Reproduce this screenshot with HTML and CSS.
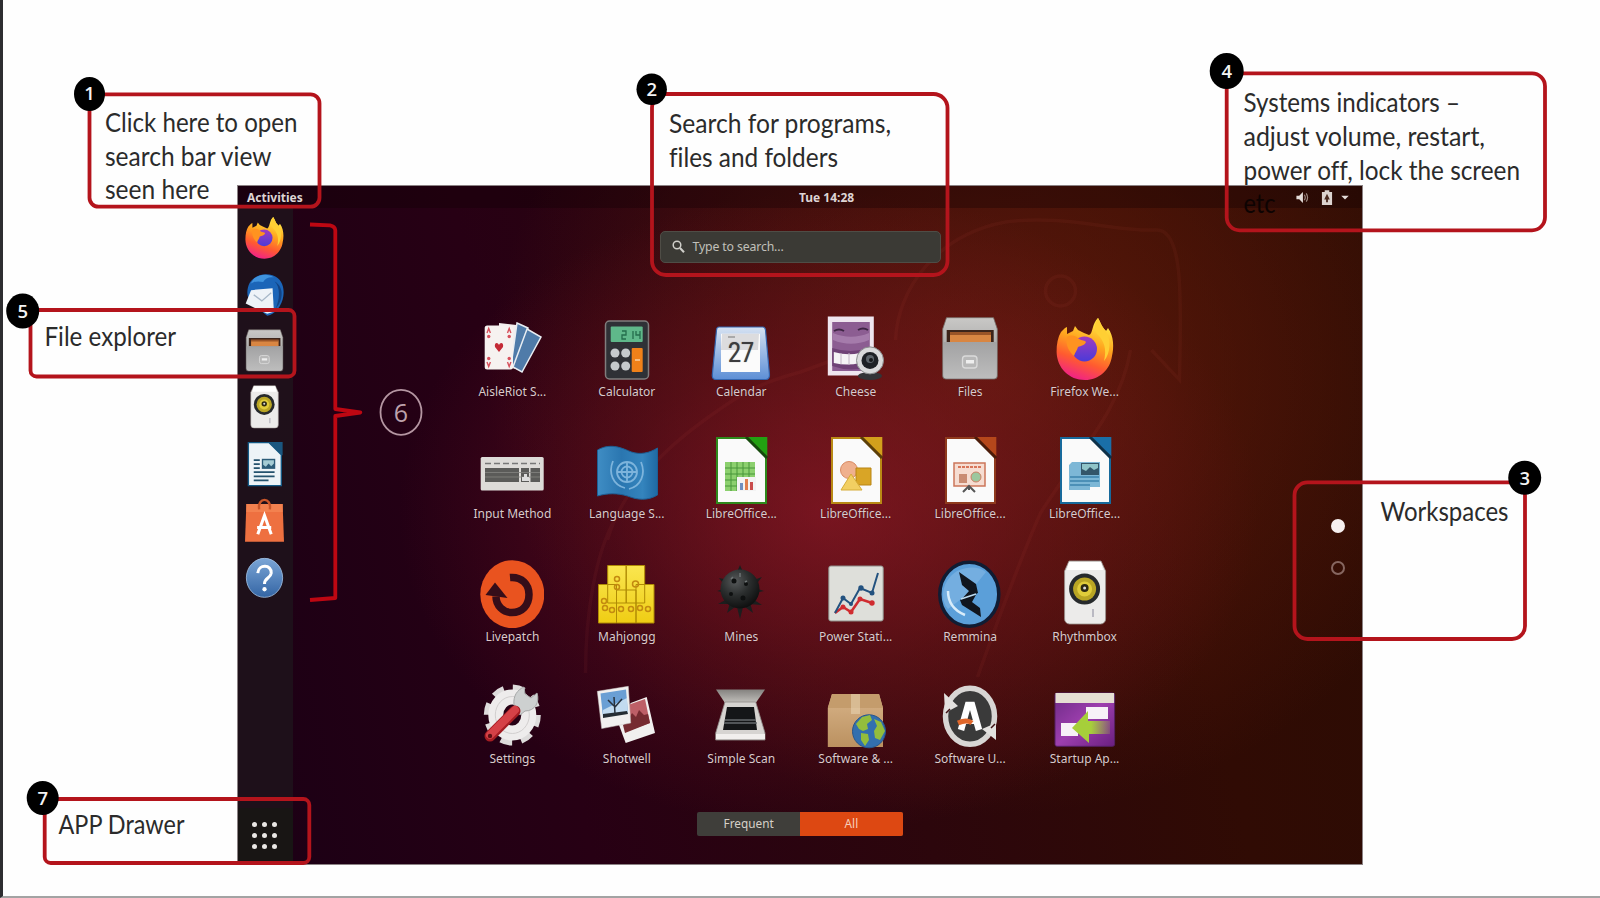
FILE: index.html
```html
<!DOCTYPE html>
<html lang="en">
<head>
<meta charset="utf-8">
<title>Ubuntu desktop overview</title>
<link rel="stylesheet" href="styles.css">
</head>
<body>
<svg class="defs" width="0" height="0" aria-hidden="true">
  <defs>
    <linearGradient id="gFox" x1=".7" y1="0" x2=".35" y2="1"><stop offset="0" stop-color="#fff04a"/><stop offset=".4" stop-color="#ffa51e"/><stop offset=".7" stop-color="#ff5a30"/><stop offset="1" stop-color="#f0208a"/></linearGradient>
    <linearGradient id="gPurple" x1="0" y1="0" x2="0" y2="1"><stop offset="0" stop-color="#a03cc0"/><stop offset="1" stop-color="#4b3ad8"/></linearGradient>
    <linearGradient id="gSteel" x1="0" y1="0" x2="0" y2="1"><stop offset="0" stop-color="#c9c8c6"/><stop offset="1" stop-color="#8f8f90"/></linearGradient>
    <linearGradient id="gFront" x1="0" y1="0" x2="0" y2="1"><stop offset="0" stop-color="#a2a2a3"/><stop offset="1" stop-color="#bdbdbd"/></linearGradient>
    <linearGradient id="gFlag" x1="0" y1="0" x2="1" y2="0"><stop offset="0" stop-color="#3f8dc4"/><stop offset=".4" stop-color="#2a76b0"/><stop offset=".75" stop-color="#3484bd"/><stop offset="1" stop-color="#1f69a3"/></linearGradient>
    <linearGradient id="gCal" x1="0" y1="0" x2="0" y2="1"><stop offset="0" stop-color="#d6e2f2"/><stop offset="1" stop-color="#5d8fd6"/></linearGradient>
    <linearGradient id="gBox" x1="0" y1="0" x2="0" y2="1"><stop offset="0" stop-color="#d7b388"/><stop offset="1" stop-color="#bb9160"/></linearGradient>
    <linearGradient id="gStart" x1="0" y1="0" x2="1" y2="1"><stop offset="0" stop-color="#6d2a86"/><stop offset=".5" stop-color="#9d3fae"/><stop offset="1" stop-color="#6a1f80"/></linearGradient>
    <linearGradient id="gArrow" x1="0" y1="0" x2="1" y2="0"><stop offset=".5" stop-color="#a6cf3a"/><stop offset="1" stop-color="#a6cf3a" stop-opacity=".2"/></linearGradient>
    <linearGradient id="gTile" x1="0" y1="0" x2="0" y2="1"><stop offset="0" stop-color="#fae650"/><stop offset="1" stop-color="#efcd14"/></linearGradient>
    <linearGradient id="gLid" x1="0" y1="0" x2="0" y2="1"><stop offset="0" stop-color="#84827f"/><stop offset="1" stop-color="#c2c0bc"/></linearGradient>
    <radialGradient id="gMine" cx=".38" cy=".3" r=".75"><stop offset="0" stop-color="#56595a"/><stop offset=".5" stop-color="#2a2d2d"/><stop offset="1" stop-color="#0c0d0d"/></radialGradient>
    <linearGradient id="gHelp" x1="0" y1="0" x2="0" y2="1"><stop offset="0" stop-color="#7aa5d6"/><stop offset="1" stop-color="#3465a4"/></linearGradient>

    <symbol id="firefox" viewBox="0 0 64 68">
      <path fill="url(#gFox)" d="M8 17l4-4 2-1v7l6-3 2-5 3 4 6 3 5 2c4-1 3-12 9-17 3 5 3 8 8 13l2-3c6 8 6 20 4 28C57 55 46 65 32 65 16 65 4 53 3.600 37 3.400 29 5 22 8 17z"/>
      <path fill="#ffcf34" d="M45 3c3 5 3 8 8 13 5 8 5 22-2 30 3-12 0-20-6-26-4-4-4-12 0-17z"/>
      <circle cx="31.500" cy="34" r="12.500" fill="url(#gPurple)"/>
      <path fill="#ff9320" d="M14 22c5-3 9-1 12 2 3 2 6 1 7 3-1 3-5 4-8 5-1 4-3 5-4 9-5-4-9-12-7-19z"/>
    </symbol>
    <symbol id="files" viewBox="0 0 64 68">
      <path fill="url(#gSteel)" stroke="#77706c" stroke-width=".8" d="M8.500 2.700h47L59.300 14v47a3 3 0 0 1-3 3H7.700a3 3 0 0 1-3-3V14z"/>
      <path fill="#3c241a" d="M8.700 15h47v12h-47z"/>
      <path fill="#d98642" d="M12 18.500h41V27H12z"/><path fill="#9a5427" d="M12 17h41v3H12z"/>
      <path fill="url(#gFront)" d="M5.200 27h53.600v33a3.500 3.500 0 0 1-3.500 3.500H8.700A3.500 3.500 0 0 1 5.200 60z"/>
      <rect x="24.500" y="41" width="14.500" height="12" rx="3" fill="#b8b8b8" stroke="#dadada" stroke-width="1.300"/><path fill="#eee" d="M28 45h8v3.500h-8z"/>
    </symbol>
    <symbol id="rhythm" viewBox="0 0 64 68">
      <path fill="#ecebea" stroke="#99928e" stroke-width=".8" d="M16 1h32l4.600 10v48a5 5 0 0 1-5 5H16.600a5 5 0 0 1-5-5V11z"/>
      <path fill="#fff" d="M16 2h32l2 8H14z"/>
      <circle cx="31.600" cy="29" r="15.500" fill="#272a2c"/><circle cx="31.600" cy="29" r="11.500" fill="#b9a524"/><circle cx="31.600" cy="29" r="7.500" fill="#e0cc3a"/><circle cx="31.600" cy="28" r="4" fill="#2d2912"/><circle cx="31.600" cy="28" r="1.500" fill="#ddd"/>
      <path stroke="#aaa9b4" stroke-width="1.500" d="M40 49v8"/>
    </symbol>
    <symbol id="writer" viewBox="0 0 64 68">
      <path fill="#fafafa" stroke="#176a9c" stroke-width="2" d="M8 1h31l18 19v46H8z"/><path fill="#1a6fa8" d="M38.300 0h20v19.500z"/><path stroke="#0d3048" stroke-width="3" d="M37 0l21 21"/>
      <path fill="#7db7d6" d="M19 25h28v25H37v3H16V28z"/><path fill="#33566a" d="M28 26h18v12H28z"/><path fill="#8fc4c8" d="M29 27h16v4l-4 2-4-3-4 4-4-2z"/>
      <path stroke="#3c84ad" stroke-width="1.300" d="M17 40h29M17 44h29M17 48h20"/>
    </symbol>
  </defs>
</svg>

<div class="page">
  <main class="desktop">
    <svg class="wallpaper-lines" viewBox="237.500 186 1124 678" aria-hidden="true">
      <path d="M585 673c0-60 10-120 30-155M607 540c10-35 30-60 53-83s50-42 73-57 45-22 67-28l60-22"/>
      <path d="M895 340c2-50 40-105 110-118 60-8 110 10 150 8 30-3 25 80 24 150l-28-30M1130 350c-10 60-50 100-90 163-20 45-40 100-63 164"/>
      <circle cx="1060" cy="291" r="15"/>
    </svg>
    <header class="topbar">
      <span class="activities">Activities</span>
      <span class="clock">Tue 14:28</span>
      <span class="tray">
        <svg width="14" height="13" viewBox="0 0 14 14"><path fill="#e4dcd8" d="M1 5h3l4-4v12L4 9H1z"/><path fill="none" stroke="#9c8880" stroke-width="1.300" d="M9.500 4q2 3 0 6M11.500 2.500q3 4.500 0 9"/></svg>
        <svg width="12" height="16" viewBox="0 0 13 17"><path fill="#dcd3cf" d="M4 0h5v2h3v14H1V2h3z"/><path fill="#4a2a20" d="M6.500 4l3 6h-2v3h-2v-3h-2z"/></svg>
        <svg class="caret" width="8" height="5" viewBox="0 0 9 6"><path fill="#e4dcd8" d="M0 .8h9L4.500 5.500z"/></svg>
      </span>
    </header>
    <div class="workarea">
      <nav class="dock">
        <svg class="dock-icon"><use href="#firefox"/></svg>
        <svg class="dock-icon" viewBox="0 0 64 68">
          <path fill="#1b65b8" d="M10 16C17 5 32 1 44 5c14 5 18 18 16 31-2 14-12 27-24 29L12 46C5 38 5 26 10 16z"/><path fill="#3f93de" d="M16 10c8-7 22-8 30-2-8-1-13 2-16 7-8-2-14-1-19 3z"/>
          <path fill="#124384" d="M47 14c9 8 8 28 1 41 12-12 14-33-1-41z"/>
          <path fill="#eef3f8" d="M4 47l8-20 32-3 2 35-10 3z"/><path fill="none" stroke="#a8b8c8" stroke-width="2" d="M16 34l12 9 14-12"/>
        </svg>
        <svg class="dock-icon"><use href="#files"/></svg>
        <svg class="dock-icon"><use href="#rhythm"/></svg>
        <svg class="dock-icon" viewBox="0 0 64 68">
          <path fill="#edf3f7" stroke="#135a86" stroke-width="2" d="M8 1h31l18 18v46H8z"/><path fill="#1a567f" d="M38 0h21v20z"/>
          <path stroke="#24526d" stroke-width="2.600" d="M16 27h9M16 33h9M16 39h9M16 45h31M16 51h31M16 57h22"/><path fill="#2b5b78" d="M28 25h20v15H28z"/><path fill="#a4cbd4" d="M30 27h16v5l-4 4-4-4-4 5-4-3z"/>
        </svg>
        <svg class="dock-icon" viewBox="0 0 64 68">
          <path fill="#ee7040" d="M5 9h54l2 56H3z"/><path fill="#f3814f" d="M5 9h54v12H5z"/><path fill="none" stroke="#c9562a" stroke-width="3.500" d="M24 17c-3-19 19-19 16 0"/>
          <path fill="none" stroke="#fff" stroke-width="4.500" d="M22 54l10-28 10 28M21 44h21"/>
        </svg>
        <svg class="dock-icon" viewBox="0 0 64 68">
          <ellipse cx="32" cy="34" rx="27" ry="29" fill="url(#gHelp)" stroke="#a4c3e6" stroke-width="1.200"/>
          <path fill="none" stroke="#fff" stroke-width="4.500" d="M22 27c1-14 21-13 20 0-1 8-10 7-10 16"/><circle cx="32" cy="51" r="3.200" fill="#fff"/>
        </svg>
        <button class="drawer" aria-label="Show applications"><i></i><i></i><i></i><i></i><i></i><i></i><i></i><i></i><i></i></button>
      </nav>
      <section class="overview">
        <div class="search">
          <svg width="13" height="13" viewBox="0 0 13 13"><circle cx="5" cy="5" r="3.800" fill="none" stroke="#d0cfca" stroke-width="1.500"/><path stroke="#d0cfca" stroke-width="2" d="M8 8l4 4.200"/></svg>
          <span>Type to search...</span>
        </div>
        <div class="apps">
          <div class="app"><svg viewBox="0 0 64 68">
            <path fill="#f2eeee" d="M19 8l26 3-6 44-20-6z"/><path fill="#4f7ba9" stroke="#e8edf2" stroke-width="1.500" d="M37 8l11 5-8 40-9-2z"/><path fill="#4f7ba9" stroke="#e8edf2" stroke-width="1.500" d="M47 14l14 8-19 35-9-5z"/>
            <rect x="4.700" y="10.400" width="28.300" height="44" rx="2.500" fill="#f6f2f0"/><path fill="#c42a36" d="M19 37l-4-5c-1-5 3-5 4-2 1-3 5-3 4 2z"/>
            <g fill="none" stroke="#d6505c" stroke-width="1.400"><path d="M7 18l1.700-4.500 1.700 4.500M27.500 18l1.700-4.500 1.700 4.500M7 47l1.700 4.500 1.700-4.500M27.500 47l1.700 4.500 1.700-4.500"/></g><g fill="#d6505c"><circle cx="8.700" cy="21.500" r="1.700"/><circle cx="29.200" cy="21.500" r="1.700"/><circle cx="8.700" cy="43.500" r="1.700"/><circle cx="29.200" cy="43.500" r="1.700"/></g></svg><span>AisleRiot S...</span></div>
          <div class="app"><svg viewBox="0 0 64 68">
            <rect x="10.500" y="6" width="43" height="58" rx="4" fill="#2f3136" stroke="#807d7d" stroke-width="1.500"/><rect x="15.700" y="11.400" width="32" height="15.600" rx="1" fill="#5fb88a"/><path fill="none" stroke="#246d4c" stroke-width="1.300" d="M27 16h4v4h-4v4h4M38 16v8M41 16v4h4M45 16v8"/>
            <g fill="#c6cacd"><circle cx="20" cy="38" r="4.500"/><circle cx="30.700" cy="38" r="4.500"/><circle cx="20" cy="51" r="4.500"/><circle cx="30.700" cy="51" r="4.500"/></g><rect x="36.700" y="33" width="11" height="24" rx="1" fill="#f08119"/><path stroke="#fbd0a0" stroke-width="1.500" d="M40 45h5"/></svg><span>Calculator</span></div>
          <div class="app"><svg viewBox="0 0 64 68">
            <path fill="url(#gCal)" stroke="#3565ae" stroke-width="1.200" d="M10 12h44q2 0 2.500 3l4 45q0 4.500-4 4.500H7q-4 0-3.700-4.500L7.500 15q.3-3 2.500-3z"/><path fill="#fbfbfb" d="M12 18.700h39V57H12z"/><path fill="#dcdcde" d="M13 18.700h37L49 35H12z"/><path stroke="#999" stroke-width="1.500" d="M19 22h7"/>
            <text x="19" y="47" font-family="Roboto" font-size="27" fill="#3c3c3e" textLength="26" lengthAdjust="spacingAndGlyphs">27</text></svg><span>Calendar</span></div>
          <div class="app"><svg viewBox="0 0 64 68">
            <path fill="#efe6ef" d="M3.800 1.400h46v59h-46z"/><path fill="#8c5d92" d="M8.200 7h37.600v49H8.200z"/><path fill="#a57bab" d="M9 18c12 5 24 5 36 0v7c-12 5-24 5-36 0z"/><path stroke="#3e2544" stroke-width="2" fill="none" d="M10 16q5-3 10 0M34 15q5-3 10 0"/><path fill="#6f4276" d="M8.200 33q18 6 37.600 0v18q-18 7-37.600 0z"/><path fill="#f5f3f5" d="M9.800 37q14 4 26 1v10q-12 3-26 0z"/><path stroke="#c2b4c4" d="M17 38v11M25 38v12"/>
            <ellipse cx="46" cy="61" rx="12" ry="4" fill="#333437"/><circle cx="46" cy="45.400" r="13.500" fill="#d9dadb" stroke="#8a8c8d"/><circle cx="46" cy="45.400" r="8.500" fill="#1d2125"/><circle cx="46" cy="44" r="4" fill="#5d656b"/><circle cx="47" cy="45" r="2" fill="#15181a"/></svg><span>Cheese</span></div>
          <div class="app"><svg><use href="#files"/></svg><span>Files</span></div>
          <div class="app"><svg><use href="#firefox"/></svg><span>Firefox We...</span></div>

          <div class="app"><svg viewBox="0 0 64 68">
            <rect x=".7" y="20" width="63" height="33.500" rx="1.500" fill="#dddbd8"/><path fill="#5b5b59" d="M5 31h34v14H5zM41 31h8v14h-8zM50.500 31H60v14h-9.500z"/><path stroke="#777" stroke-width="1.500" stroke-dasharray="6 3" d="M5 26.500h55"/><path stroke="#858582" stroke-width=".8" d="M5 35.500h55M5 40h55"/><path fill="#ddd" d="M42 40h2v-3h3v3h2v4h-7z"/></svg><span>Input Method</span></div>
          <div class="app"><svg viewBox="0 0 64 68">
            <path fill="url(#gFlag)" stroke="#1d5f95" d="M2.500 13c14-8 26-1 34 2 9 3 18 1 26-4v47c-10 6-20 5-30 1-10-3-20-3-30 0z"/>
            <g fill="none" stroke="#7db4dc" stroke-width="1.800"><circle cx="32" cy="35" r="10"/><circle cx="32" cy="35" r="5.500"/><path d="M22 35h20M32 25v20M18 24c-5 12 0 24 12 27M46 25c5 12 0 24-12 27"/></g></svg><span>Language S...</span></div>
          <div class="app"><svg viewBox="0 0 64 68">
            <path fill="#fafafa" stroke="#2e8a1c" stroke-width="2" d="M8 1h31l18 19v46H8z"/><path fill="#23a012" d="M38.300 0h20v19.500z"/><path stroke="#154a0c" stroke-width="3" d="M37 0l21 21"/>
            <path fill="#8cd06e" d="M16 25h30v29H16z"/><path stroke="#48963a" stroke-width="1" d="M16 31h30M16 37h30M16 43h30M16 49h30M22 25v29M28 25v29M34 25v29M40 25v29"/><path fill="#f3f3f3" d="M28 40h19v14H28z"/><path fill="#6f8fc0" d="M31 46h3v7h-3z"/><path fill="#e08050" d="M36 42h3v11h-3z"/><path fill="#c94c4c" d="M41 45h3v8h-3z"/></svg><span>LibreOffice...</span></div>
          <div class="app"><svg viewBox="0 0 64 68">
            <path fill="#fafafa" stroke="#b98a15" stroke-width="2" d="M8 1h31l18 19v46H8z"/><path fill="#d2a01c" d="M38.300 0h20v19.500z"/><path stroke="#5b3f08" stroke-width="3" d="M37 0l21 21"/>
            <circle cx="25" cy="33" r="8.500" fill="#efb08e" stroke="#d98b64"/><path fill="#d9a526" stroke="#b98413" d="M32 31h15v17H32z"/><path fill="#f2cf62" stroke="#d6ac38" d="M27 37l11 16H17z"/></svg><span>LibreOffice...</span></div>
          <div class="app"><svg viewBox="0 0 64 68">
            <path fill="#fafafa" stroke="#8f3a1d" stroke-width="2" d="M8 1h31l18 19v46H8z"/><path fill="#b5471b" d="M38.300 0h20v19.500z"/><path stroke="#4b1c0a" stroke-width="3" d="M37 0l21 21"/>
            <path fill="#f6ddd2" stroke="#cc765a" stroke-width="1.500" d="M16 26h31v23H16z"/><path stroke="#d8765a" stroke-width="2" stroke-dasharray="3 1" d="M20 30h23"/><path fill="#c98c73" d="M21 37h8v9h-8z"/><circle cx="38" cy="40" r="5" fill="#9cc79e" stroke="#cc8065"/><path fill="none" stroke="#555" stroke-width="2" d="M25 55l6-6 6 6M31 49v4"/></svg><span>LibreOffice...</span></div>
          <div class="app"><svg><use href="#writer"/></svg><span>LibreOffice...</span></div>

          <div class="app"><svg viewBox="0 0 64 68">
            <ellipse cx="32.300" cy="34.200" rx="32" ry="34" fill="#e9531f"/><path fill="none" stroke="#350d19" stroke-width="7.500" d="M30 17.500c12-1 19 7 19 17 0 11-7 18-17 18-9 0-16-7-16-16"/><path fill="#350d19" d="M5.500 35L15 22.500 27.500 38z"/></svg><span>Livepatch</span></div>
          <div class="app"><svg viewBox="0 0 64 68">
            <g fill="url(#gTile)" stroke="#b08b05" stroke-width="1"><path d="M3.500 24.500h18V63h-18zM41 24.500h18V63H41zM21.500 30H41v33H21.500zM12.700 5.500h18.500V43H12.700zM31.200 5.500h18.500V43H31.200z"/></g>
            <g fill="none" stroke="#c38a10" stroke-width="1.500"><circle cx="22" cy="19" r="2.500"/><circle cx="22" cy="27" r="2.500"/><circle cx="40.500" cy="24" r="3"/><circle cx="9" cy="41" r="2.500"/><circle cx="10" cy="48" r="2.500"/><circle cx="17" cy="50" r="2.500"/><circle cx="26" cy="49" r="2.500"/><circle cx="36" cy="49" r="2.500"/><circle cx="45" cy="48" r="2.500"/><circle cx="53" cy="49" r="2.500"/></g></svg><span>Mahjongg</span></div>
          <div class="app"><svg viewBox="0 0 64 68">
            <path fill="#1c1e1e" d="M31 5l3 7h-6zM31 59l-3-12h6zM10 18l10 2-4 6zM53 17l-11 4 4 5zM9 44l11-6 3 6zM53 45l-11-7-3 6zM8 31l9-3v5zM55 31l-9-3v5zM18 53l3-10 5 4zM44 53l-3-10-5 4z"/><circle cx="31" cy="29" r="19.500" fill="url(#gMine)"/><g fill="#0e1010"><circle cx="25" cy="21" r="2.500"/><circle cx="37" cy="24" r="2"/><circle cx="22" cy="34" r="2"/><circle cx="34" cy="38" r="2.500"/></g><path stroke="#6e7474" stroke-width="1.500" d="M22 19l2-2M36 22l2-1M31 13v4"/></svg><span>Mines</span></div>
          <div class="app"><svg viewBox="0 0 64 68">
            <rect x="4.800" y="6" width="54.400" height="55" rx="2" fill="#dedfda" stroke="#8d8d88"/>
            <path fill="none" stroke="#d02c30" stroke-width="2.500" d="M11 53l8-6 8 5 9-13 12 4"/><path fill="none" stroke="#23527f" stroke-width="2" d="M11 53l8-15 8 6 9-16 12 5 6-20"/><g fill="#d02c30"><circle cx="19" cy="47" r="2.500"/><circle cx="27" cy="52" r="2.500"/><circle cx="36" cy="39" r="2.500"/><circle cx="48" cy="43" r="2.700"/></g><g fill="#23527f"><circle cx="19" cy="38" r="2.500"/><circle cx="27" cy="44" r="2"/><circle cx="37" cy="28" r="2.700"/><circle cx="48" cy="33" r="2.500"/></g></svg><span>Power Stati...</span></div>
          <div class="app"><svg viewBox="0 0 64 68">
            <ellipse cx="31.300" cy="34.200" rx="29.500" ry="32" fill="#5b9fd9" stroke="#101c33" stroke-width="3.500"/><path fill="#74aee0" d="M12 17C20 7 38 4 48 12L31 33 10 49C2 40 4 26 12 17z"/><path fill="none" stroke="#d8ecfa" stroke-width="2.500" d="M10 31q0 17 17 24"/>
            <path fill="#10151e" d="M21 12l17 12 2 9-17 7 8-9-7-6zM43 57L24 45l-2-5 17-7-5 9 8 6z"/><path stroke="#bcdcf2" stroke-width="1.500" d="M23 39l15-5"/></svg><span>Remmina</span></div>
          <div class="app"><svg><use href="#rhythm"/></svg><span>Rhythmbox</span></div>

          <div class="app"><svg viewBox="0 0 64 68">
            <ellipse cx="32.300" cy="33" rx="24" ry="26" fill="none" stroke="#dddbdb" stroke-width="9" stroke-dasharray="11 8.600"/><ellipse cx="32.300" cy="33" rx="16.500" ry="18" fill="none" stroke="#eeecec" stroke-width="15"/><ellipse cx="32.300" cy="33" rx="17" ry="18.500" fill="none" stroke="#d2cfcf" stroke-width="1"/>
            <path fill="#cdd0d0" stroke="#a6a8a8" d="M34 23c-1-9 3-15 10-18l1 7 6 4 6-5c3 9-2 18-12 18l-5 4z"/><path stroke="#a41d23" stroke-width="11" stroke-linecap="round" d="M35 29L10 54"/><path stroke="#d54147" stroke-width="8" stroke-linecap="round" d="M35 28L10 53"/><circle cx="10" cy="54" r="2.200" fill="#5e1014"/></svg><span>Settings</span></div>
          <div class="app"><svg viewBox="0 0 64 68">
            <path fill="#f1f0ef" d="M35.700 21L51.700 15 60 51 30.700 61 24 43z"/><path fill="#bd5f67" d="M33 23l17-6 5 24-25 9z"/><path fill="#762b31" d="M28 43l5-5 4-7 4 4 3-7 5 5 4-1 2 9-25 10z"/>
            <path fill="#f1f0ef" stroke="#cbc7c5" stroke-width=".5" d="M2.300 9.300L33.300 4.300 35.700 41 6.700 46.600z"/><path fill="#6a9fd4" d="M5.500 11.500L31 7.500 33 31 8 35z"/><path fill="#c2dbef" d="M8 28l24-12 1 15-25 4z"/><path fill="#252d33" d="M8 32l24-3 1 3-25 4z"/><path stroke="#28323c" stroke-width="1.500" fill="none" d="M20 32l-1-17M19 24l-6-6M20 25l7-8"/></svg><span>Shotwell</span></div>
          <div class="app"><svg viewBox="0 0 64 68">
            <path fill="url(#gLid)" d="M7 7.600h49L46.700 21H16z"/><path fill="#d6d4d1" stroke="#8f8c89" stroke-width=".8" d="M16 20h30.700L56 51v7H6.700v-7z"/><path fill="#141618" d="M18 25h27l3 23H14z"/><path stroke="#656b6d" stroke-width="1.500" d="M15 41h33M16 38h31"/><path fill="#f1efed" d="M7 52h49v5H7z"/></svg><span>Simple Scan</span></div>
          <div class="app"><svg viewBox="0 0 64 68">
            <path fill="url(#gBox)" d="M8 12h47l4 14v39H3.800V26z"/><path fill="#c49c6c" d="M8 12h47l4 14H3.800z"/><path fill="#e9d5b5" d="M27 12h9v20h-9z" opacity=".55"/>
            <circle cx="45" cy="49.300" r="16.500" fill="#326fae" stroke="#27558a"/><path fill="#93bd3c" d="M32 42l6-7 8-2 2 5-5 4 1 5-5 2-4-2zM37 51l7 1 1 6-4 6-4-6zM50 37l7 3 4 9-5 9-5-2-1-7 3-5z"/></svg><span>Software &amp; ...</span></div>
          <div class="app"><svg viewBox="0 0 64 68">
            <ellipse cx="32" cy="34.300" rx="24.500" ry="28" fill="#3a3a3a" stroke="#d8d6d4" stroke-width="5.500"/><path fill="#e3e1df" d="M6 11l14 13-13 7zM58 58L44 47l14-6z"/><path stroke="#3d1012" stroke-width="1.500" d="M8 31l4-4M57 42l-4 4"/><path fill="none" stroke="#fff" stroke-width="6.500" d="M23 48l7-25h4l7 25"/><path stroke="#fff" stroke-width="4" d="M26 40h13"/><path fill="none" stroke="#e0672b" stroke-width="5" d="M20 41q9-4 14 0"/></svg><span>Software U...</span></div>
          <div class="app"><svg viewBox="0 0 64 68">
            <rect x="2" y="11" width="59.600" height="53.300" rx="2" fill="url(#gStart)" stroke="#542064"/><path fill="#e5dfd3" d="M2.500 11h58.600v10H2.500z"/><path fill="#f7f1f7" d="M33 25h22v12H33zM8 41h17v13H8z"/><path fill="url(#gArrow)" d="M19 46l16-17v10h22v13H36v9z"/></svg><span>Startup Ap...</span></div>
        </div>
        <div class="tabs"><span class="tab">Frequent</span><span class="tab active">All</span></div>
      </section>
      <aside class="workspaces"><i class="dot current"></i><i class="dot"></i></aside>
    </div>
  </main>

  <svg class="notes" width="1600" height="898" viewBox="0 0 1600 898">
    <g class="frames">
      <rect x="89.500" y="94.300" width="230" height="112.400" rx="9"/>
      <rect x="30.500" y="310" width="264" height="66.500" rx="6"/>
      <rect x="652" y="94" width="295.500" height="181" rx="14"/>
      <rect x="1226.700" y="73.300" width="318.300" height="157" rx="13"/>
      <rect x="1294.500" y="482.300" width="230.500" height="156.700" rx="13"/>
      <rect x="44.700" y="799" width="264.600" height="64" rx="6"/>
      <path class="bracket" d="M310 224.500l20 .8q5 1 5.300 5V409l25 3.500L335.300 416V598l-25.300 2"/>
    </g>
    <g class="badges">
      <ellipse cx="89.500" cy="94" rx="15.500" ry="17"/><ellipse cx="22.700" cy="311" rx="16.500" ry="17.500"/><ellipse cx="651.700" cy="89.300" rx="15.200" ry="15.700"/><ellipse cx="1226.700" cy="71" rx="17" ry="18"/><ellipse cx="1524.700" cy="477.700" rx="16.500" ry="17"/><ellipse cx="42.700" cy="798" rx="16" ry="17"/>
    </g>
    <g class="numbers">
      <text x="89.500" y="100">1</text><text x="22.700" y="318">5</text><text x="651.700" y="96">2</text><text x="1226.700" y="78">4</text><text x="1524.700" y="485">3</text><text x="42.700" y="805">7</text>
    </g>
    <g class="six"><ellipse cx="401" cy="412.300" rx="20.500" ry="22.500"/><text x="401" y="421.500">6</text></g>
    <g class="captions">
      <text x="105" y="131.700" textLength="192.500" lengthAdjust="spacingAndGlyphs">Click here to open</text>
      <text x="105" y="165.500" textLength="166.500" lengthAdjust="spacingAndGlyphs">search bar view</text>
      <text x="105" y="199" textLength="104.500" lengthAdjust="spacingAndGlyphs">seen here</text>
      <text x="669" y="133.300" textLength="222" lengthAdjust="spacingAndGlyphs">Search for programs,</text>
      <text x="669" y="167.300" textLength="169" lengthAdjust="spacingAndGlyphs">files and folders</text>
      <text x="1243.500" y="111.700" textLength="216.500" lengthAdjust="spacingAndGlyphs">Systems indicators –</text>
      <text x="1243.500" y="145.700" textLength="241.500" lengthAdjust="spacingAndGlyphs">adjust volume, restart,</text>
      <text x="1243.500" y="179.500" textLength="276.500" lengthAdjust="spacingAndGlyphs">power off, lock the screen</text>
      <text class="dim" x="1243.500" y="213" textLength="32" lengthAdjust="spacingAndGlyphs">etc</text>
      <text x="44.500" y="346" textLength="131.500" lengthAdjust="spacingAndGlyphs">File explorer</text>
      <text x="1380.500" y="521" textLength="128" lengthAdjust="spacingAndGlyphs">Workspaces</text>
      <text x="58.500" y="834" textLength="126" lengthAdjust="spacingAndGlyphs">APP Drawer</text>
    </g>
  </svg>
</div>
</body>
</html>
```
FILE: styles.css
```css
* { box-sizing: border-box; }
body { margin: 0; background: #fefefe; font-family: "Noto Sans", sans-serif; }
.defs { position: absolute; }
.page { position: relative; width: 1600px; height: 898px; overflow: hidden; padding: 186px 0 0 234.5px; border-left: 3px solid #2d2d30; border-bottom: 2px solid #a3a3a3; background: #fefefe; }
.desktop {
  position: relative; display: flex; flex-direction: column; width: 1124px; height: 678px; outline: 1px solid #8b8284;
  background:
    radial-gradient(ellipse 430px 320px at 590px 325px, rgba(150,24,44,.62), rgba(130,20,36,.34) 50%, transparent),
    radial-gradient(ellipse 500px 440px at 750px 190px, rgba(125,36,14,.6), rgba(110,30,12,.35) 55%, transparent),
    linear-gradient(78deg, #1b0015 0%, #270014 28%, #2c060c 55%, #300b04 80%, #2c0c03 100%);
}
.wallpaper-lines { position: absolute; inset: 0; width: 100%; height: 100%; fill: none; stroke: rgba(215,90,70,.07); stroke-width: 3.5; }
.topbar { position: relative; height: 22px; display: grid; grid-template-columns: 1fr auto 1fr; align-items: center; padding: 1px 12.5px 0 9.5px; background: rgba(12,0,4,.3); color: #ded5d5; font-size: 12px; font-weight: 700; line-height: 20px; }
.activities { font-size: 12px; }
.clock { font-size: 12px; transform: translateX(28.5px); }
.tray { justify-self: end; display: flex; align-items: center; gap: 11.5px; }
.caret { margin-left: -3px; }
.workarea { position: relative; flex: 1; display: flex; }
.dock { width: 55px; display: flex; flex-direction: column; align-items: center; padding-top: 7px; gap: 11px; background: rgba(31,20,28,.78); }
.dock-icon { width: 43px; height: 45.7px; flex: none; margin-right: 2px; }
.drawer { width: 55px; height: 56px; margin-top: auto; padding: 13.5px 14.7px; border: 0; background: #181514; display: grid; grid-template-columns: repeat(3, 5px); grid-auto-rows: 5px; column-gap: 4.8px; row-gap: 6px; }
.drawer i { border-radius: 50%; background: #e9e6e4; }
.overview { flex: 1; display: flex; flex-direction: column; align-items: center; padding: 22.7px 0 0; }
.search { width: 281px; height: 32.6px; margin-left: -7px; border-radius: 5px; background: #3b3a35; border: 1px solid #4f4d46; display: flex; align-items: center; gap: 8px; padding: 0 11px; color: #c1c0ba; font-size: 12.3px; letter-spacing: -.15px; }
.apps { width: 686.7px; margin: 51.3px 0 0 -10px; display: grid; grid-template-columns: repeat(6, 114.45px); grid-auto-rows: 122.6px; }
.app { display: flex; flex-direction: column; align-items: center; color: #dcc9cc; font-size: 12px; line-height: 17px; white-space: nowrap; text-shadow: 0 0 1px rgba(0,0,0,.6); }
.app svg { width: 64px; height: 68px; flex: none; }
.tabs { display: flex; margin: 7.3px 0 0 -7px; width: 205.5px; height: 23.4px; border-radius: 2px; overflow: hidden; background: #3f3e3a; color: #d6d0c8; font-size: 11.8px; line-height: 22px; text-align: center; }
.tab { flex: 1; }
.tab.active { background: #dd4812; color: #f6cdb8; }
.workspaces { width: 47px; display: flex; flex-direction: column; align-items: center; gap: 28px; padding-top: 311px; }
.dot { width: 14px; height: 14px; border-radius: 50%; border: 2px solid #866660; }
.dot.current { background: #f7f0f0; border-color: #f7f0f0; }
.notes { position: absolute; left: -3px; top: 0; }
.frames { fill: none; stroke: #b4141c; stroke-width: 3.8; }
.bracket { stroke: #bd0712; stroke-linejoin: round; }
.badges { fill: #000; }
.numbers { fill: #f4f4f4; font: 600 18.5px "Open Sans", sans-serif; text-anchor: middle; }
.six { fill: none; stroke: #b596a2; stroke-width: 1.8; }
.six text { fill: #bda2ac; stroke: none; font: 25px "Open Sans", sans-serif; text-anchor: middle; }
.captions { fill: #2b2b2b; font: 26.5px Lato, sans-serif; font-variant-ligatures: none; }
.captions .dim { fill: #0d0302; }
```
